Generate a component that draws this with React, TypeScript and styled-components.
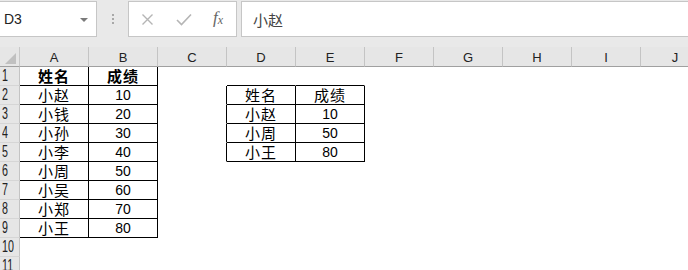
import styled, { createGlobalStyle } from 'styled-components';

const GlobalStyle = createGlobalStyle`
  html, body {
    margin: 0;
    padding: 0;
    background: #ffffff;
    overflow: hidden;
  }

  body {
    font-family: "Liberation Sans", "Noto Sans CJK SC", sans-serif;
  }
`;

const Page = styled.div`
  width: 688px;
  height: 270px;
  overflow: hidden;
  background: #ffffff;
`;

const FormulaBar = styled.div`
  display: flex;
  align-items: flex-start;
  height: 47px;
  padding-top: 1px;
  box-sizing: border-box;
  background: #e9e9e9;
`;

const NameBox = styled.div`
  position: relative;
  display: flex;
  align-items: center;
  width: 97px;
  height: 36px;
  box-sizing: border-box;
  padding-left: 4px;
  background: #ffffff;
  border: 1px solid #c6c6c6;
  border-left: none;
  font-size: 14px;
  color: #222;
`;

const DropArrow = styled.span`
  position: absolute;
  right: 8px;
  top: 16px;
  width: 0;
  height: 0;
  border-left: 4px solid transparent;
  border-right: 4px solid transparent;
  border-top: 4px solid #7a7a7a;
`;

const Grip = styled.div`
  display: flex;
  flex-direction: column;
  gap: 2px;
  width: 31px;
  align-items: center;
  padding-top: 13px;

  span {
    width: 2px;
    height: 2px;
    background: #a8a8a8;
  }
`;

const ButtonBox = styled.div`
  display: flex;
  align-items: center;
  width: 109px;
  height: 36px;
  box-sizing: border-box;
  padding-left: 12px;
  background: #ffffff;
  border: 1px solid #c6c6c6;
  gap: 22px;
`;

const Fx = styled.span`
  font-family: "Liberation Serif", serif;
  font-style: italic;
  font-size: 17px;
  color: #666;
  margin-left: -1px;
  margin-top: -2px;

  sub {
    font-size: 12px;
    vertical-align: -1px;
  }
`;

const FormulaInput = styled.div`
  flex: 1;
  height: 36px;
  margin-left: 4px;
  box-sizing: border-box;
  padding: 7px 0 0 11px;
  background: #ffffff;
  border: 1px solid #c6c6c6;
  border-right: none;
  font-size: 15px;
  color: #444;
`;

const Sheet = styled.div`
  display: grid;
  grid-template-columns: 20px repeat(10, 69px);
  grid-template-rows: 20px repeat(11, 19px);
`;

const Corner = styled.div`
  position: relative;
  background: #e6e6e6;
  border-right: 1px solid #c8c8c8;
  border-bottom: 1px solid #a0a0a0;
  box-sizing: border-box;

  &::after {
    content: '';
    position: absolute;
    right: 3px;
    bottom: 2px;
    width: 0;
    height: 0;
    border-left: 11px solid transparent;
    border-bottom: 11px solid #c0c0c0;
  }
`;

const ColHead = styled.div`
  display: flex;
  align-items: flex-end;
  justify-content: center;
  padding-bottom: 1px;
  box-sizing: border-box;
  background: #e6e6e6;
  border-right: 1px solid #c4c4c4;
  border-bottom: 1px solid #a0a0a0;
  font-size: 13px;
  color: #222;
`;

const RowHead = styled.div`
  display: flex;
  align-items: center;
  padding-left: 2px;
  box-sizing: border-box;
  background: #e6e6e6;
  border-right: 1px solid #c4c4c4;
  border-bottom: 1px solid #d6d6d6;
  overflow: hidden;
  color: #222;
`;

const RowNum = styled.span`
  display: inline-block;
  font-size: 17px;
  line-height: 18px;
  transform: scaleX(0.63);
  transform-origin: left center;
  white-space: nowrap;
`;

const Cell = styled.div<{ $br: boolean; $bb: boolean; $bold?: boolean; $num?: boolean }>`
  display: flex;
  align-items: flex-end;
  justify-content: center;
  box-sizing: border-box;
  border-right: 1px solid ${p => (p.$br ? '#000' : 'transparent')};
  border-bottom: 1px solid ${p => (p.$bb ? '#000' : 'transparent')};
  font-size: ${p => (p.$num ? '14px' : '15px')};
  font-weight: ${p => (p.$bold ? 700 : 400)};
  letter-spacing: ${p => (p.$num ? '0' : '1px')};
  line-height: 17px;
  color: #000;
  white-space: nowrap;
`;

const cols = ['A', 'B', 'C', 'D', 'E', 'F', 'G', 'H', 'I', 'J'];

const scores: [string, string][] = [
  ['小赵', '10'],
  ['小钱', '20'],
  ['小孙', '30'],
  ['小李', '40'],
  ['小周', '50'],
  ['小吴', '60'],
  ['小郑', '70'],
  ['小王', '80'],
];

const picked: [string, string][] = [
  ['小赵', '10'],
  ['小周', '50'],
  ['小王', '80'],
];

// cell values keyed by "row-col" (col 1 = A)
const values: Record<string, { text: string; bold?: boolean; num?: boolean }> = {};
values['1-1'] = { text: '姓名', bold: true };
values['1-2'] = { text: '成绩', bold: true };
scores.forEach(([name, score], i) => {
  values[`${i + 2}-1`] = { text: name };
  values[`${i + 2}-2`] = { text: score, num: true };
});
values['2-4'] = { text: '姓名' };
values['2-5'] = { text: '成绩' };
picked.forEach(([name, score], i) => {
  values[`${i + 3}-4`] = { text: name };
  values[`${i + 3}-5`] = { text: score, num: true };
});

function inTable(r: number, c: number) {
  if (r >= 1 && r <= 9 && c >= 1 && c <= 2) return true;
  if (r >= 2 && r <= 5 && c >= 4 && c <= 5) return true;
  return false;
}

export default function App() {
  const rows = Array.from({ length: 11 }, (_, i) => i + 1);

  return (
    <Page>
      <GlobalStyle />
      <FormulaBar>
        <NameBox>
          D3
          <DropArrow />
        </NameBox>
        <Grip>
          <span />
          <span />
          <span />
        </Grip>
        <ButtonBox>
          <svg width="13" height="13" viewBox="0 0 13 13">
            <path d="M1.5 1.5 L11.5 11.5 M11.5 1.5 L1.5 11.5" stroke="#b5b5b5" strokeWidth="1.4" fill="none" />
          </svg>
          <svg width="16" height="13" viewBox="0 0 16 13">
            <path d="M1 7 L5.5 11.5 L15 1.5" stroke="#b5b5b5" strokeWidth="1.6" fill="none" />
          </svg>
          <Fx>
            f<sub>x</sub>
          </Fx>
        </ButtonBox>
        <FormulaInput>小赵</FormulaInput>
      </FormulaBar>
      <Sheet>
        <Corner />
        {cols.map(c => (
          <ColHead key={c}>{c}</ColHead>
        ))}
        {rows.map(r => (
          <Row key={r} r={r} />
        ))}
      </Sheet>
    </Page>
  );
}

function Row({ r }: { r: number }) {
  return (
    <>
      <RowHead>
        <RowNum>{r}</RowNum>
      </RowHead>
      {cols.map((_, i) => {
        const c = i + 1;
        const v = values[`${r}-${c}`];
        return (
          <Cell
            key={c}
            $br={inTable(r, c) || inTable(r, c + 1)}
            $bb={inTable(r, c) || inTable(r + 1, c)}
            $bold={v?.bold}
            $num={v?.num}
          >
            {v?.text}
          </Cell>
        );
      })}
    </>
  );
}
